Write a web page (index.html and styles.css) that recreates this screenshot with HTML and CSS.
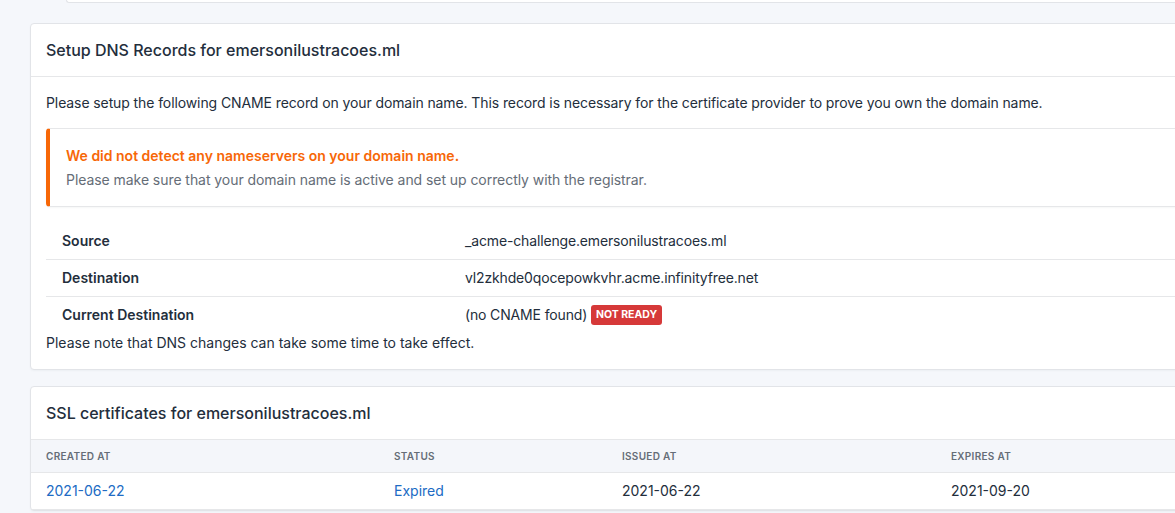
FILE: index.html
```html
<!DOCTYPE html>
<html lang="en">
<head>
<meta charset="utf-8">
<title>DNS Records</title>
<link rel="stylesheet" href="styles.css">
</head>
<body>
<div class="page">
  <div class="prev-card"></div>

  <div class="card">
    <div class="card-header">
      <h3 class="card-title">Setup DNS Records for emersonilustracoes.ml</h3>
    </div>
    <div class="card-body">
      <p class="intro">Please setup the following CNAME record on your domain name. This record is necessary for the certificate provider to prove you own the domain name.</p>
      <div class="alert">
        <div class="alert-title">We did not detect any nameservers on your domain name.</div>
        <div class="alert-text">Please make sure that your domain name is active and set up correctly with the registrar.</div>
      </div>
      <table class="dns-table">
        <tbody>
          <tr><th>Source</th><td>_acme-challenge.emersonilustracoes.ml</td></tr>
          <tr><th>Destination</th><td>vl2zkhde0qocepowkvhr.acme.infinityfree.net</td></tr>
          <tr><th>Current Destination</th><td>(no CNAME found) <span class="badge">NOT READY</span></td></tr>
        </tbody>
      </table>
      <p class="note">Please note that DNS changes can take some time to take effect.</p>
    </div>
  </div>

  <div class="card">
    <div class="card-header">
      <h3 class="card-title">SSL certificates for emersonilustracoes.ml</h3>
    </div>
    <table class="cert-table">
      <thead>
        <tr><th class="c1">Created At</th><th class="c2">Status</th><th class="c3">Issued At</th><th>Expires At</th></tr>
      </thead>
      <tbody>
        <tr><td><a href="#">2021-06-22</a></td><td><a href="#">Expired</a></td><td>2021-06-22</td><td>2021-09-20</td></tr>
      </tbody>
    </table>
  </div>
</div>
</body>
</html>
```

FILE: styles.css
```css
html, body {
  margin: 0;
  padding: 0;
  background: #f5f7fb;
  overflow: hidden;
}
body {
  font-family: Inter, "Noto Sans", sans-serif;
  font-size: 14px;
  line-height: 20px;
  color: #232e3c;
}
.page {
  width: 1400px;
  padding-left: 30px;
}
.prev-card {
  margin-left: 36px;
  height: 2px;
  background: #fff;
  border-left: 1px solid #e2e4e8;
  border-bottom: 1px solid #e2e4e8;
  border-bottom-left-radius: 4px;
  margin-bottom: 20px;
}
.card {
  background: #fff;
  border: 1px solid #e2e4e8;
  border-radius: 4px;
  box-shadow: 0 1px 2px rgba(35, 46, 60, 0.04);
  margin-bottom: 16px;
}
.card-header {
  height: 52px;
  display: flex;
  align-items: center;
  padding: 0 15px;
  border-bottom: 1px solid #e6e7e9;
}
.card-title {
  margin: 0;
  font-size: 16px;
  font-weight: 500;
  line-height: 24px;
  color: #232e3c;
}
.card-body {
  padding: 16px 15px 16px;
}
.intro {
  margin: 0 0 15px;
  letter-spacing: -0.1px;
}
.alert {
  border: 1px solid #e6e7e9;
  border-left: 4px solid #f76707;
  border-radius: 4px;
  padding: 17px 16px 16px;
  box-shadow: 0 1px 2px rgba(35, 46, 60, 0.04);
  margin-bottom: 16px;
}
.alert-title {
  color: #f76707;
  font-weight: 600;
  margin-bottom: 4px;
}
.alert-text {
  color: #656d77;
  letter-spacing: -0.06px;
}
.dns-table {
  width: 100%;
  border-collapse: collapse;
}
.dns-table th, .dns-table td {
  text-align: left;
  padding: 8px 16px;
  line-height: 20px;
  vertical-align: middle;
}
.dns-table th {
  width: 371px;
  font-weight: 600;
}
.dns-table td {
  letter-spacing: -0.15px;
}
.dns-table tr + tr th, .dns-table tr + tr td {
  border-top: 1px solid #e6e7e9;
}
.badge {
  display: inline-block;
  background: #d63939;
  color: #fff;
  font-size: 10.5px;
  font-weight: 700;
  line-height: 20px;
  letter-spacing: 0;
  padding: 0 5px;
  border-radius: 3px;
  margin-left: 0;
  vertical-align: top;
}
.note {
  margin: 0;
}
.cert-table {
  width: 100%;
  border-collapse: collapse;
  table-layout: fixed;
}
.cert-table th {
  background: #f4f6fa;
  color: #656d77;
  font-size: 10px;
  font-weight: 600;
  letter-spacing: 0.03em;
  text-transform: uppercase;
  text-align: left;
  padding: 0 15px;
  height: 32px;
  border-bottom: 1px solid #e6e7e9;
}
.cert-table .c1 { width: 318px; }
.cert-table .c2 { width: 198px; }
.cert-table .c3 { width: 299px; }
.cert-table td {
  padding: 8px 15px;
  border-bottom: 1px solid #e6e7e9;
}
.cert-table a {
  color: #206bc4;
  text-decoration: none;
}
```
